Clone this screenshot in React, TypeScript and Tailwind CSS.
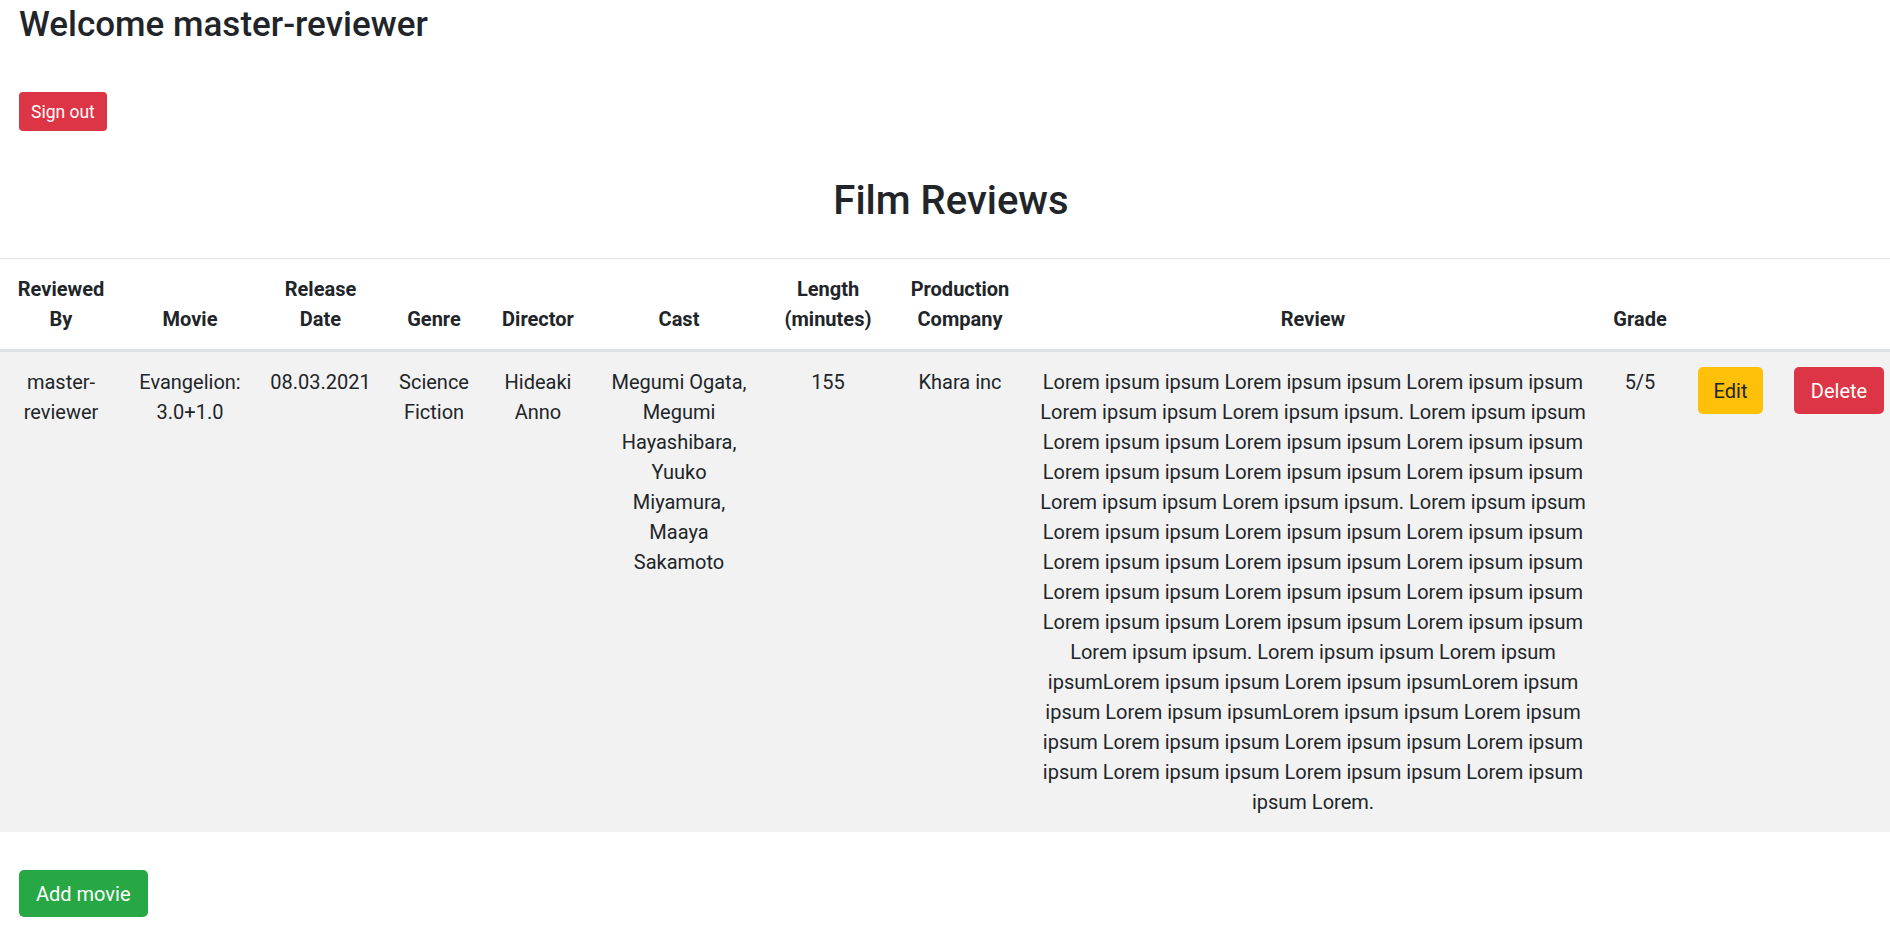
import React from 'react';

type Review = {
    reviewedBy: string;
    movie: string;
    releaseDate: string;
    genre: string;
    director: string;
    cast: string;
    length: string;
    company: string;
    review: string;
    grade: string;
};

const reviews: Review[] = [
    {
        reviewedBy: 'master-\nreviewer',
        movie: 'Evangelion:\n3.0+1.0',
        releaseDate: '08.03.2021',
        genre: 'Science\nFiction',
        director: 'Hideaki\nAnno',
        cast: 'Megumi Ogata,\nMegumi\nHayashibara,\nYuuko\nMiyamura,\nMaaya\nSakamoto',
        length: '155',
        company: 'Khara inc',
        review: [
            'Lorem ipsum ipsum Lorem ipsum ipsum Lorem ipsum ipsum',
            'Lorem ipsum ipsum Lorem ipsum ipsum. Lorem ipsum ipsum',
            'Lorem ipsum ipsum Lorem ipsum ipsum Lorem ipsum ipsum',
            'Lorem ipsum ipsum Lorem ipsum ipsum Lorem ipsum ipsum',
            'Lorem ipsum ipsum Lorem ipsum ipsum. Lorem ipsum ipsum',
            'Lorem ipsum ipsum Lorem ipsum ipsum Lorem ipsum ipsum',
            'Lorem ipsum ipsum Lorem ipsum ipsum Lorem ipsum ipsum',
            'Lorem ipsum ipsum Lorem ipsum ipsum Lorem ipsum ipsum',
            'Lorem ipsum ipsum Lorem ipsum ipsum Lorem ipsum ipsum',
            'Lorem ipsum ipsum. Lorem ipsum ipsum Lorem ipsum',
            'ipsumLorem ipsum ipsum Lorem ipsum ipsumLorem ipsum',
            'ipsum Lorem ipsum ipsumLorem ipsum ipsum Lorem ipsum',
            'ipsum Lorem ipsum ipsum Lorem ipsum ipsum Lorem ipsum',
            'ipsum Lorem ipsum ipsum Lorem ipsum ipsum Lorem ipsum',
            'ipsum Lorem.',
        ].join('\n'),
        grade: '5/5',
    },
];

const headers = [
    'Reviewed\nBy',
    'Movie',
    'Release\nDate',
    'Genre',
    'Director',
    'Cast',
    'Length\n(minutes)',
    'Production\nCompany',
    'Review',
    'Grade',
    '',
    '',
];

const colWidths = ['w-[122px]', 'w-[136px]', 'w-[125px]', 'w-[102px]', 'w-[106px]', 'w-[176px]', 'w-[122px]', 'w-[142px]', 'w-[564px]', 'w-[90px]', 'w-[91px]', 'w-[126px]'];

const App: React.FC = () => {
    return (
        <div className="w-full overflow-hidden bg-white text-[#212529] font-['Segoe_UI','Roboto','Helvetica_Neue',Arial,sans-serif] text-[20px] leading-[30px]">
            <div className="w-[1902px]">
                <div className="px-[19px]">
                    <h3 className="pt-[4px] text-[35px] leading-[42px] font-medium">Welcome master-reviewer</h3>
                    <button className="mt-[46px] h-[39px] px-[12px] rounded-[4px] bg-[#dc3545] text-white text-[17.5px] leading-[26px]">
                        Sign out
                    </button>
                </div>

                <h2 className="mt-[46px] text-center text-[40px] leading-[48px] font-medium">Film Reviews</h2>

                <table className="mt-[33px] w-full table-fixed border-collapse text-center">
                    <colgroup>
                        {colWidths.map((w, i) => (
                            <col key={i} className={w} />
                        ))}
                    </colgroup>
                    <thead>
                        <tr>
                            {headers.map((h, i) => (
                                <th
                                    key={i}
                                    className="align-bottom whitespace-pre-line border-t border-b-[3px] border-[#dee2e6] px-[6px] py-[15px] font-bold"
                                >
                                    {h}
                                </th>
                            ))}
                        </tr>
                    </thead>
                    <tbody>
                        {reviews.map((r, index) => (
                            <tr key={index} className="bg-[#f2f2f2]">
                                <td className="align-top whitespace-pre-line px-[6px] pt-[15px] pb-[15px]">{r.reviewedBy}</td>
                                <td className="align-top whitespace-pre-line px-[6px] py-[15px]">{r.movie}</td>
                                <td className="align-top whitespace-pre-line px-[6px] py-[15px]">{r.releaseDate}</td>
                                <td className="align-top whitespace-pre-line px-[6px] py-[15px]">{r.genre}</td>
                                <td className="align-top whitespace-pre-line px-[6px] py-[15px]">{r.director}</td>
                                <td className="align-top whitespace-pre-line px-[6px] py-[15px]">{r.cast}</td>
                                <td className="align-top whitespace-pre-line px-[6px] py-[15px]">{r.length}</td>
                                <td className="align-top whitespace-pre-line px-[6px] py-[15px]">{r.company}</td>
                                <td className="align-top whitespace-pre px-[2px] py-[15px]">{r.review}</td>
                                <td className="align-top whitespace-pre-line px-[6px] py-[15px]">{r.grade}</td>
                                <td className="align-top px-[6px] py-[15px]">
                                    <button className="h-[47px] px-[16px] rounded-[5px] bg-[#ffc107] text-[#212529]">Edit</button>
                                </td>
                                <td className="align-top px-[6px] py-[15px]">
                                    <button className="h-[47px] px-[17px] rounded-[5px] bg-[#dc3545] text-white">Delete</button>
                                </td>
                            </tr>
                        ))}
                    </tbody>
                </table>

                <div className="px-[19px] mt-[38px]">
                    <button className="h-[47px] px-[17px] rounded-[5px] bg-[#28a745] text-white">Add movie</button>
                </div>
            </div>
        </div>
    );
};

export default App;
